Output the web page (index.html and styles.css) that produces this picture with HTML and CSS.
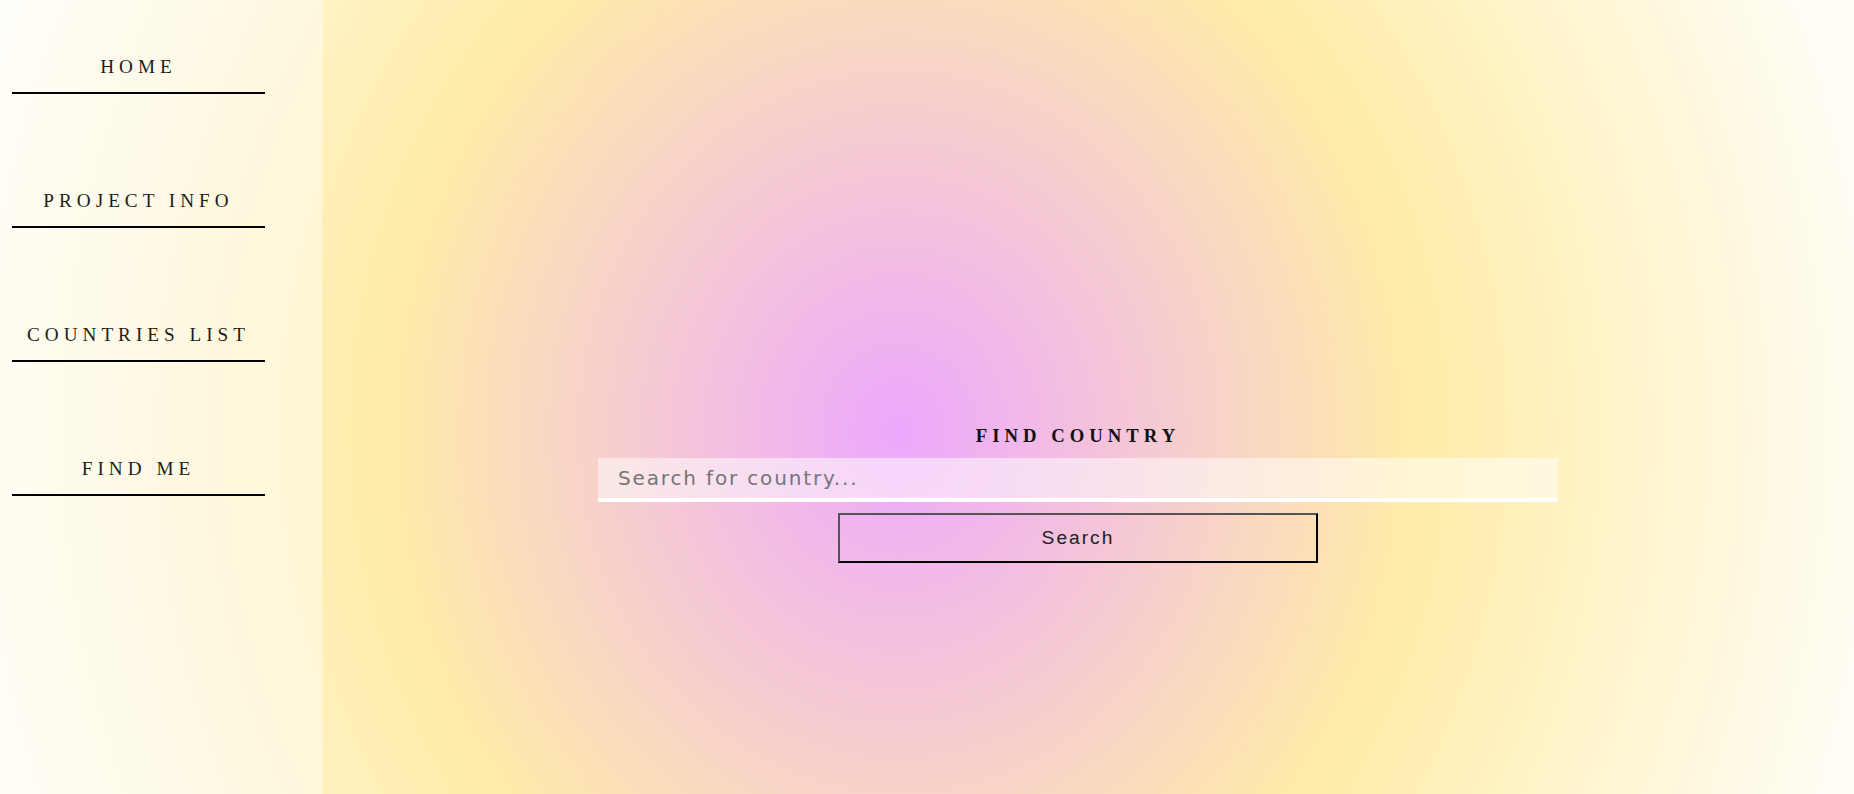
FILE: index.html
```html
<!DOCTYPE html>
<html lang="en">
<head>
<meta charset="utf-8">
<title>Find Country</title>
<link rel="stylesheet" href="styles.css">
</head>
<body>
  <aside class="sidebar">
    <nav class="nav">
      <a class="nav-item" href="#">HOME</a>
      <a class="nav-item" href="#">PROJECT INFO</a>
      <a class="nav-item" href="#">COUNTRIES LIST</a>
      <a class="nav-item" href="#">FIND ME</a>
    </nav>
  </aside>
  <main class="main">
    <h3 class="title">FIND COUNTRY</h3>
    <input class="search-input" type="text" placeholder="Search for country...">
    <button class="search-button" type="button">Search</button>
  </main>
</body>
</html>
```
FILE: styles.css
```css
html, body {
  margin: 0;
  padding: 0;
  height: 100%;
}

body {
  display: flex;
  min-height: 100vh;
  background: radial-gradient(ellipse 514px 579px at 899px 432px,
    #eca8fd 0%, #ffeca8 100%, #fffdf4 190%);
  font-family: "Liberation Serif", serif;
}

.sidebar {
  width: 322px;
  flex: none;
  background: rgba(255, 255, 255, 0.45);
}

.nav {
  width: 253px;
  padding: 55px 0 0 12px;
  display: flex;
  flex-direction: column;
}

.nav-item {
  display: block;
  text-align: center;
  font-family: "Liberation Serif", serif;
  font-size: 19.2px;
  line-height: 22px;
  letter-spacing: 5px;
  color: #1c1c1c;
  text-decoration: none;
  padding-top: 1px;
  padding-bottom: 14px;
  border-bottom: 2px solid #000;
  margin-bottom: 95px;
}

.main {
  flex: 1;
  padding: 425px 20px 0 0;
  display: flex;
  flex-direction: column;
  align-items: center;
}

.title {
  margin: 0;
  font-family: "Liberation Serif", serif;
  font-weight: bold;
  font-size: 18.72px;
  line-height: 22px;
  letter-spacing: 5px;
  color: #111;
}

.search-input {
  margin-top: 11px;
  width: 960px;
  height: 44px;
  box-sizing: border-box;
  border: none;
  border-bottom: 4px solid #fff;
  background: rgba(255, 255, 255, 0.5);
  padding: 0 20px;
  font-family: "DejaVu Sans", sans-serif;
  font-size: 20px;
  letter-spacing: 1.85px;
  color: #333;
  outline: none;
}

.search-input::placeholder {
  color: #757575;
}

.search-button {
  margin-top: 11px;
  width: 480px;
  height: 50px;
  box-sizing: border-box;
  border-width: 2px;
  border-style: solid;
  border-color: #545454 #000 #000 #545454;
  background: transparent;
  font-family: "Liberation Sans", sans-serif;
  font-size: 19.2px;
  letter-spacing: 2px;
  color: #222;
  padding: 0;
  cursor: pointer;
}
```
